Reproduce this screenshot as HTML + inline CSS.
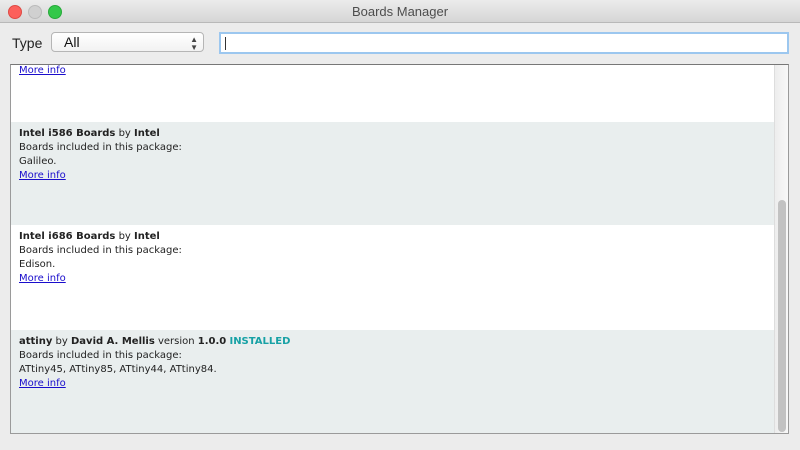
<!DOCTYPE html><html><head><style>
body{margin:0;width:800px;height:450px;background:#ececec;font-family:"DejaVu Sans",Verdana,sans-serif;overflow:hidden;position:relative}
.title{position:absolute;left:0;top:0;width:800px;height:22px;background:linear-gradient(#ececec,#d6d6d6);border-bottom:1px solid #b9b9b9;text-align:center;font:13px "Liberation Sans",sans-serif;line-height:23px;color:#4d4d4d}
.dot{position:absolute;top:5px;width:12px;height:12px;border-radius:50%}
.lbl{position:absolute;left:12px;top:35px;font:14px "Liberation Sans",sans-serif;color:#222}
.sel{position:absolute;left:51px;top:32px;width:153px;height:20px;border:1px solid #b5b5b5;border-radius:4px;background:linear-gradient(#fff,#f2f2f2);box-sizing:border-box;font:14px "Liberation Sans",sans-serif;line-height:19px;padding-left:12px;color:#111}
.sel span{position:absolute;right:5px;font-size:8px;line-height:8px;top:3px;color:#444}
.srch{position:absolute;left:219px;top:32px;width:570px;height:22px;border:2px solid #9cc7ef;background:#fff;box-sizing:border-box}
.srch i{position:absolute;left:4px;top:3px;width:1px;height:13px;background:#333}
.list{position:absolute;left:10px;top:64px;width:779px;height:370px;border:1px solid #9a9a9a;border-top-color:#777;box-sizing:border-box;background:#fff;overflow:hidden}
.row{position:absolute;left:0;width:763px;font-size:10px;line-height:14px;color:#222;padding:5px 0 0 8px;box-sizing:border-box}
.g{background:#e9eeee}
b{font-weight:bold}
a{color:#1a0dcc;text-decoration:underline}
.sb{position:absolute;left:763px;top:0;width:15px;height:370px;background:linear-gradient(90deg,#ededed,#fafafa);border-left:1px solid #ddd}
.th{position:absolute;left:3px;top:135px;width:8px;height:232px;border-radius:4px;background:#c2c2c2}
</style></head><body>
<div class="title">Boards Manager
<div class="dot" style="left:8px;background:#fc605b;border:0.5px solid #de4a44"></div>
<div class="dot" style="left:28px;background:#d0d0d0;border:0.5px solid #bbb"></div>
<div class="dot" style="left:48px;background:#34c84a;border:0.5px solid #27a93a"></div>
</div>
<div class="lbl">Type</div>
<div class="sel">All<span>▲<br>▼</span></div>
<div class="srch"><i></i></div>
<div class="list">
<div class="row" style="top:-6px;height:63px"><a>More info</a></div>
<div class="row g" style="top:57px;height:103px"><b>Intel i586 Boards</b> by <b>Intel</b><br>Boards included in this package:<br>Galileo.<br><a>More info</a></div>
<div class="row" style="top:160px;height:105px"><b>Intel i686 Boards</b> by <b>Intel</b><br>Boards included in this package:<br>Edison.<br><a>More info</a></div>
<div class="row g" style="top:265px;height:105px"><b>attiny</b> by <b>David A. Mellis</b> version <b>1.0.0</b> <b style="color:#17a1a5">INSTALLED</b><br>Boards included in this package:<br>ATtiny45, ATtiny85, ATtiny44, ATtiny84.<br><a>More info</a></div>
<div class="sb"><div class="th"></div></div>
</div>
</body></html>
